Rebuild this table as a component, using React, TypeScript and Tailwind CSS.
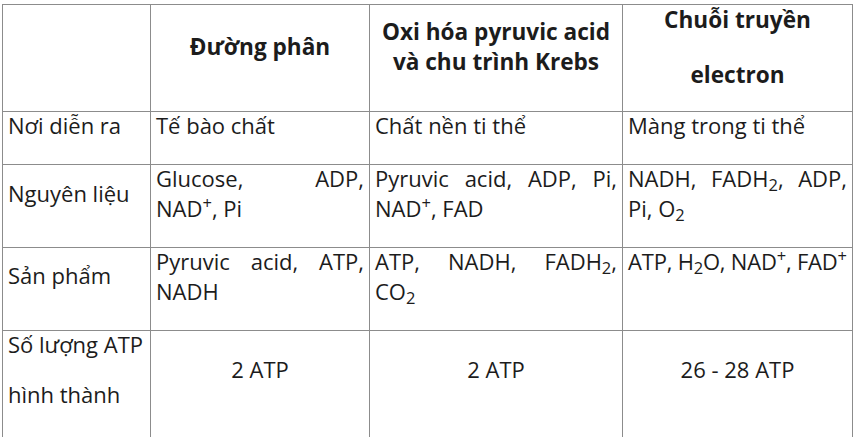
export default function App() {
  const line = "border border-[#8c8c8c] p-0";
  const cell = line + " align-top";
  const mid = line + " align-middle";
  const body = "-mt-[2px] px-[5px] pb-[24px] text-justify";

  return (
    <div
      className="bg-white pl-[2px] pt-[4px] w-[860px] h-[437px] overflow-hidden text-[#1c1c1c] text-[22px] leading-[30px]"
      style={{ fontFamily: '"Open Sans", "Liberation Sans", sans-serif' }}
    >
      <table className="table-fixed border-collapse w-[850px]">
        <colgroup>
          <col className="w-[148px]" />
          <col className="w-[219px]" />
          <col className="w-[253px]" />
          <col className="w-[230px]" />
        </colgroup>
        <thead>
          <tr className="font-bold text-center text-[22.6px]">
            <th className={mid}></th>
            <th className={mid}>
              <div className="pb-[22px]">Đường phân</div>
            </th>
            <th className={mid}>
              <div className="pb-[22px] px-[6px]">Oxi hóa pyruvic acid và chu trình Krebs</div>
            </th>
            <th className={mid}>
              <div className="pb-[21px]">
                <div className="mb-[25px]">Chuỗi truyền</div>
                <div>electron</div>
              </div>
            </th>
          </tr>
        </thead>
        <tbody>
          <tr>
            <td className={cell}>
              <div className={body}>Nơi diễn ra</div>
            </td>
            <td className={cell}>
              <div className={body}>Tế bào chất</div>
            </td>
            <td className={cell}>
              <div className={body}>Chất nền ti thể</div>
            </td>
            <td className={cell}>
              <div className={body}>Màng trong ti thể</div>
            </td>
          </tr>
          <tr>
            <td className={cell}>
              <div className={body + " pt-[15px]"}>Nguyên liệu</div>
            </td>
            <td className={cell}>
              <div className={body}>
                Glucose, ADP, NAD<sup>+</sup>, Pi
              </div>
            </td>
            <td className={cell}>
              <div className={body}>
                Pyruvic acid, ADP, Pi, NAD<sup>+</sup>, FAD
              </div>
            </td>
            <td className={cell}>
              <div className={body}>
                NADH, FADH<sub>2</sub>, ADP, Pi, O<sub>2</sub>
              </div>
            </td>
          </tr>
          <tr>
            <td className={cell}>
              <div className={body + " pt-[14px]"}>Sản phẩm</div>
            </td>
            <td className={cell}>
              <div className={body}>Pyruvic acid, ATP, NADH</div>
            </td>
            <td className={cell}>
              <div className={body}>
                ATP, NADH, FADH<sub>2</sub>, CO<sub>2</sub>
              </div>
            </td>
            <td className={cell}>
              <div className="-mt-[2px] px-[5px] pb-[24px] whitespace-nowrap tracking-[-0.2px]">
                ATP, H<sub>2</sub>O, NAD<sup>+</sup>, FAD<sup>+</sup>
              </div>
            </td>
          </tr>
          <tr>
            <td className={cell}>
              <div className="-mt-[2px] px-[5px] pb-[30px]">
                <div className="mb-[20px]">Số lượng ATP</div>
                <div>hình thành</div>
              </div>
            </td>
            <td className={mid + " text-center"}>
              <div className="pb-[32px]">2 ATP</div>
            </td>
            <td className={mid + " text-center"}>
              <div className="pb-[32px]">2 ATP</div>
            </td>
            <td className={mid + " text-center"}>
              <div className="pb-[32px]">26 - 28 ATP</div>
            </td>
          </tr>
        </tbody>
      </table>
    </div>
  );
}
